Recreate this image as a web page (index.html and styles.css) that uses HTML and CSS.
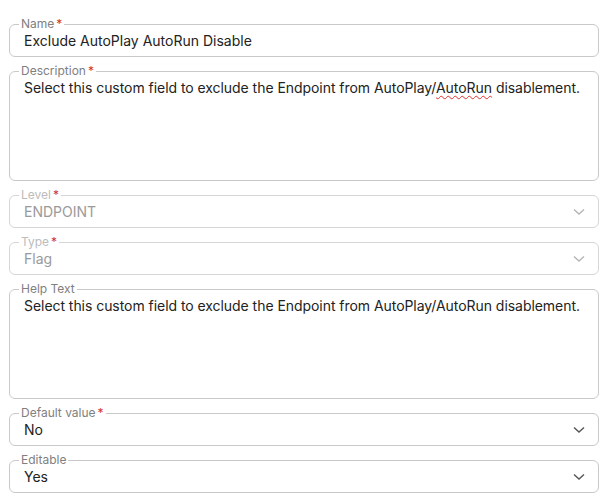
FILE: index.html
```html
<!DOCTYPE html>
<html lang="en">
<head>
    <meta charset="UTF-8">
    <title>Custom Field</title>
    <link rel="stylesheet" href="styles.css">
</head>
<body>

<form class="field-form">
    <fieldset class="field">
        <legend class="field-label">Name<span class="req">*</span></legend>
        <div class="field-value">Exclude AutoPlay AutoRun Disable</div>
    </fieldset>

    <fieldset class="field">
        <legend class="field-label">Description<span class="req">*</span></legend>
        <div class="field-value field-multi">Select this custom field to exclude the Endpoint from AutoPlay/<span class="misspelled">AutoRun</span> disablement.</div>
    </fieldset>

    <fieldset class="field field-disabled">
        <legend class="field-label">Level<span class="req">*</span></legend>
        <div class="field-value field-select">
            <span>ENDPOINT</span>
            <svg class="chevron" width="12" height="8" viewBox="0 0 12 8"><polyline points="1,1.5 6,6 11,1.5" /></svg>
        </div>
    </fieldset>

    <fieldset class="field field-disabled">
        <legend class="field-label">Type<span class="req">*</span></legend>
        <div class="field-value field-select">
            <span>Flag</span>
            <svg class="chevron" width="12" height="8" viewBox="0 0 12 8"><polyline points="1,1.5 6,6 11,1.5" /></svg>
        </div>
    </fieldset>

    <fieldset class="field">
        <legend class="field-label">Help Text</legend>
        <div class="field-value field-multi">Select this custom field to exclude the Endpoint from AutoPlay/AutoRun disablement.</div>
    </fieldset>

    <fieldset class="field">
        <legend class="field-label">Default value<span class="req">*</span></legend>
        <div class="field-value field-select">
            <span>No</span>
            <svg class="chevron" width="12" height="8" viewBox="0 0 12 8"><polyline points="1,1.5 6,6 11,1.5" /></svg>
        </div>
    </fieldset>

    <fieldset class="field">
        <legend class="field-label">Editable</legend>
        <div class="field-value field-select">
            <span>Yes</span>
            <svg class="chevron" width="12" height="8" viewBox="0 0 12 8"><polyline points="1,1.5 6,6 11,1.5" /></svg>
        </div>
    </fieldset>
</form>

</body>
</html>
```

FILE: styles.css
```css
html
{
    font-family: Inter, "Noto Sans", sans-serif;
}

body
{
    margin: 0;
    background: #fff;
}

.field-form
{
    display: flex;
    flex-direction: column;
    gap: 7px;
    padding: 17px 7px 0 9px;
}

.field
{
    margin: 0;
    padding: 0 14px 5px;
    border: 1px solid #c9c9c9;
    border-radius: 6px;
    min-width: 0;
}

.field-label
{
    margin-left: -5px;
    padding: 0 2px;
    font-size: 12px;
    line-height: 14px;
    color: #808080;
}

.req
{
    color: #d0342c;
    margin-left: 2px;
}

.field-value
{
    font-size: 14px;
    line-height: 20px;
    color: #222;
}

.field-multi
{
    height: 97px;
    margin-right: -10px;
    letter-spacing: -0.05px;
}

.field-select
{
    display: flex;
    align-items: center;
    justify-content: space-between;
}

.chevron
{
    margin-right: -1px;
}

.chevron polyline
{
    fill: none;
    stroke: #555;
    stroke-width: 1.4;
}

.misspelled
{
    text-decoration: underline wavy #e03030;
    text-decoration-thickness: 1px;
    text-underline-offset: 2px;
}

.field-disabled
{
    border-color: #d6d6d6;
}

.field-disabled .field-label
{
    color: #bcbcbc;
}

.field-disabled .field-value
{
    color: #9a9a9a;
}

.field-disabled .chevron polyline
{
    stroke: #b5b5b5;
}
```
